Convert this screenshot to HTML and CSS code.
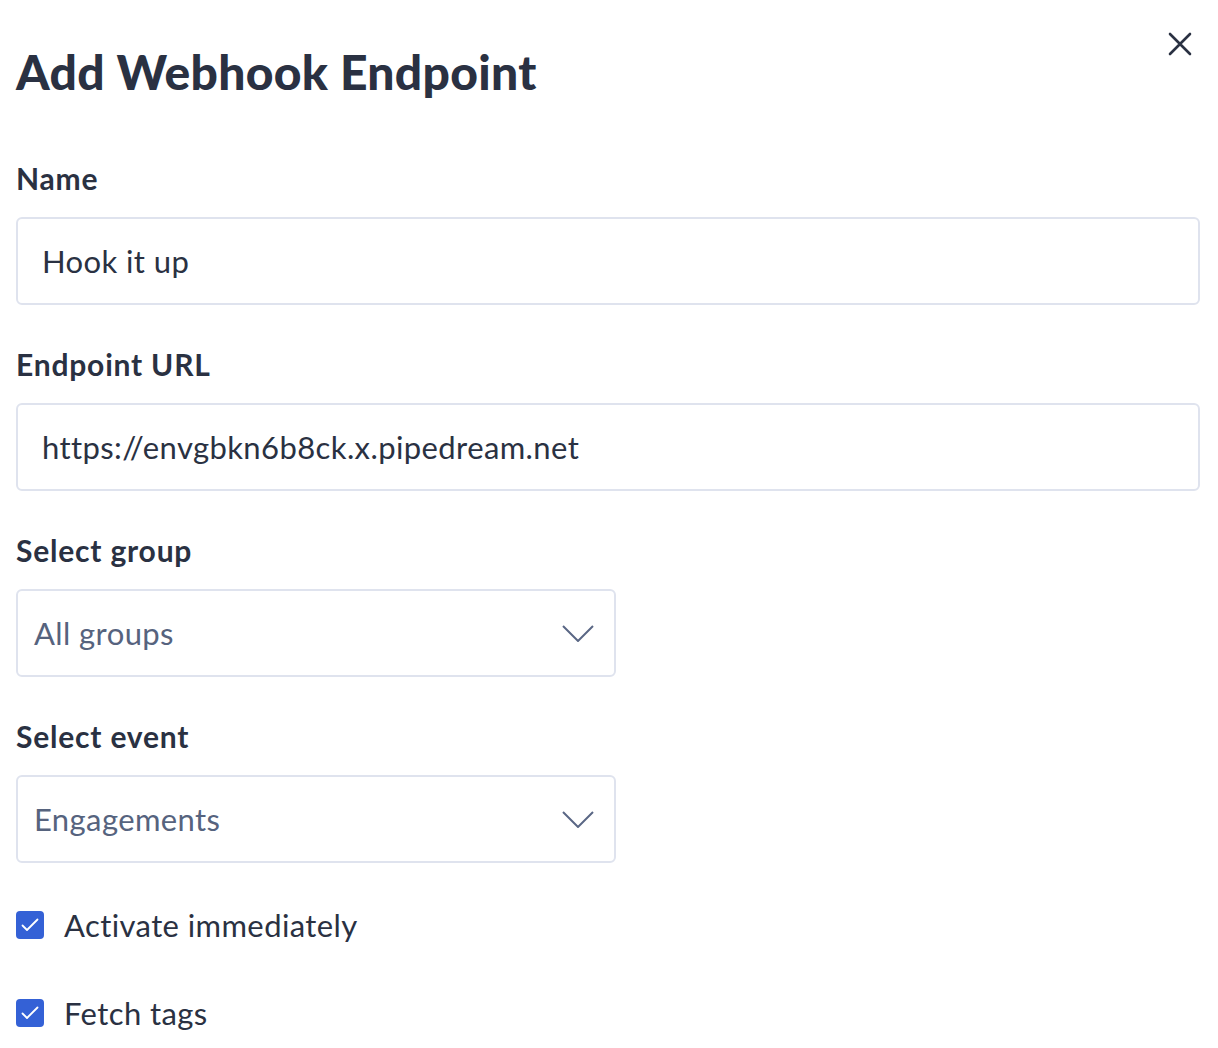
FILE: index.html
```html
<!DOCTYPE html>
<html lang="en">
<head>
  <meta charset="UTF-8">
  <meta name="viewport" content="width=device-width, initial-scale=1.0">
  <title>Add Webhook Endpoint</title>
  <link rel="stylesheet" href="styles.css">
</head>
<body>
  <div class="modal">
    <div class="modal-header">
      <h1>Add Webhook Endpoint</h1>
      <button class="close" type="button" aria-label="Close">
        <svg width="24" height="24" viewBox="0 0 24 24" fill="none" stroke="#2a3142" stroke-width="2.6" stroke-linecap="round">
          <path d="M2 2L22 22M22 2L2 22"/>
        </svg>
      </button>
    </div>
    <form id="webhookForm">
      <div class="field">
        <label for="name">Name</label>
        <input type="text" id="name" class="input" value="Hook it up">
      </div>
      <div class="field">
        <label for="url">Endpoint URL</label>
        <input type="text" id="url" class="input" value="https://envgbkn6b8ck.x.pipedream.net">
      </div>
      <div class="field">
        <label for="group">Select group</label>
        <div class="select" id="group">
          <span>All groups</span>
          <svg width="32" height="17" viewBox="0 0 32 17" fill="none" stroke="#5a6785" stroke-width="2">
            <path d="M1 1L16 16L31 1"/>
          </svg>
        </div>
      </div>
      <div class="field">
        <label for="event">Select event</label>
        <div class="select" id="event">
          <span>Engagements</span>
          <svg width="32" height="17" viewBox="0 0 32 17" fill="none" stroke="#5a6785" stroke-width="2">
            <path d="M1 1L16 16L31 1"/>
          </svg>
        </div>
      </div>
      <div class="checks">
        <label class="check">
          <span class="box">
            <svg width="18" height="14" viewBox="0 0 18 14" fill="none" stroke="#fff" stroke-width="1.8" stroke-linecap="round" stroke-linejoin="round">
              <path d="M1.5 7.5L6 12L16.5 1.5"/>
            </svg>
          </span>
          Activate immediately
        </label>
        <label class="check">
          <span class="box">
            <svg width="18" height="14" viewBox="0 0 18 14" fill="none" stroke="#fff" stroke-width="1.8" stroke-linecap="round" stroke-linejoin="round">
              <path d="M1.5 7.5L6 12L16.5 1.5"/>
            </svg>
          </span>
          Fetch tags
        </label>
      </div>
    </form>
  </div>
</body>
</html>
```

FILE: styles.css
```css
body {
  margin: 0;
  font-family: Lato, "Open Sans", sans-serif;
  color: #2a3142;
  background: #fff;
}
.modal {
  padding: 24px 18px 0 16px;
}
.modal-header {
  display: flex;
  justify-content: space-between;
  align-items: flex-start;
}
h1 {
  margin: 19px 0 0;
  font-size: 48px;
  line-height: 58px;
  font-weight: 900;
  letter-spacing: 0.3px;
}
.close {
  width: 40px;
  height: 40px;
  padding: 0;
  border: none;
  background: none;
  display: flex;
  align-items: center;
  justify-content: center;
  cursor: pointer;
}
form {
  margin-top: 59px;
}
.field {
  margin-bottom: 41px;
}
.field label {
  display: block;
  font-size: 30px;
  line-height: 36px;
  font-weight: 700;
  letter-spacing: 0.8px;
  margin-bottom: 21px;
}
.input {
  display: block;
  width: 100%;
  height: 88px;
  box-sizing: border-box;
  border: 2px solid #dfe3ee;
  border-radius: 6px;
  padding: 0 24px;
  font-family: inherit;
  font-size: 31px;
  letter-spacing: 0.4px;
  color: #2a3142;
  outline: none;
}
.select {
  width: 600px;
  height: 88px;
  box-sizing: border-box;
  border: 2px solid #dfe3ee;
  border-radius: 6px;
  padding: 0 20px 0 16px;
  display: flex;
  align-items: center;
  justify-content: space-between;
  font-size: 31px;
  letter-spacing: 0.4px;
  color: #56637e;
}
.checks {
  display: flex;
  flex-direction: column;
  gap: 48px;
  margin-top: 42px;
}
.check {
  display: flex;
  align-items: center;
  gap: 20px;
  height: 40px;
  font-size: 31px;
  letter-spacing: 0.4px;
}
.box {
  width: 28px;
  height: 28px;
  border-radius: 4px;
  background: #3461d6;
  display: flex;
  align-items: center;
  justify-content: center;
}
```
